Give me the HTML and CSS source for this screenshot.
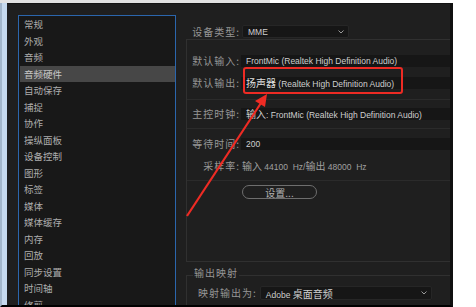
FILE: index.html
```html
<!DOCTYPE html>
<html lang="zh-CN">

<head>
    <meta charset="UTF-8">
    <meta name="viewport" content="width=device-width, initial-scale=1.0">
    <title>首选项 - 音频硬件</title>
    <link rel="stylesheet" href="styles.css">
</head>

<body>
    <div class="screen">
        <div class="topbar"><div class="topbar-tab"></div></div>

        <div class="desk">
            <div class="edge"></div>

            <div class="window">
                <ul class="cats">
                    <li>常规</li>
                    <li>外观</li>
                    <li>音频</li>
                    <li class="active">音频硬件</li>
                    <li>自动保存</li>
                    <li>捕捉</li>
                    <li>协作</li>
                    <li>操纵面板</li>
                    <li>设备控制</li>
                    <li>图形</li>
                    <li>标签</li>
                    <li>媒体</li>
                    <li>媒体缓存</li>
                    <li>内存</li>
                    <li>回放</li>
                    <li>同步设置</li>
                    <li>时间轴</li>
                    <li>修剪</li>
                </ul>

                <div class="pane">
                    <div class="row device">
                        <span class="label">设备类型:</span>
                        <div class="select short">
                            <span class="value">MME</span>
                            <svg class="chev" width="6" height="4" viewBox="0 0 6 4"><polyline points="0.5,0.5 3,3 5.5,0.5" fill="none" stroke="#9a9a9a" stroke-width="1"/></svg>
                        </div>
                    </div>

                    <div class="group">
                        <div class="block b1">
                            <div class="row">
                                <span class="label">默认输入:</span>
                                <div class="field">FrontMic (Realtek High Definition Audio)</div>
                            </div>
                            <div class="row">
                                <span class="label">默认输出:</span>
                                <div class="field"><span class="zh bright">扬声器</span> (Realtek High Definition Audio)</div>
                            </div>
                        </div>

                        <div class="block b2">
                            <div class="row">
                                <span class="label">主控时钟:</span>
                                <div class="field"><span class="zh">输入</span>: FrontMic (Realtek High Definition Audio)</div>
                            </div>
                        </div>

                        <div class="block b3">
                            <div class="row">
                                <span class="label">等待时间:</span>
                                <div class="field">200</div>
                            </div>
                            <div class="row">
                                <span class="label">采样率:</span>
                                <div class="info"><span class="zh">输入</span> 44100&nbsp; Hz/<span class="zh">输出</span> 48000&nbsp; Hz</div>
                            </div>
                        </div>

                        <div class="block b4">
                            <button class="btn">设置...</button>
                        </div>
                    </div>

                    <fieldset class="mapping">
                        <legend>输出映射</legend>
                        <div class="row">
                            <span class="label">映射输出为:</span>
                            <div class="select wide">
                                <span class="value">Adobe <span class="zh">桌面音频</span></span>
                                <svg class="chev" width="6" height="4" viewBox="0 0 6 4"><polyline points="0.5,0.5 3,3 5.5,0.5" fill="none" stroke="#9a9a9a" stroke-width="1"/></svg>
                            </div>
                        </div>
                    </fieldset>
                </div>
            </div>

            <div class="blank"></div>
        </div>

        <!-- annotation drawn over the screenshot -->
        <svg class="marks" width="476" height="307" viewBox="0 0 476 307">
            <rect x="244" y="68" width="158" height="25" rx="2" fill="none" stroke="#ee2b24" stroke-width="2"/>
            <line x1="187" y1="216" x2="261" y2="103" stroke="#ee2b24" stroke-width="2.2"/>
            <polygon points="267,94 265,107 255,101" fill="#ee2b24"/>
        </svg>
    </div>
</body>

</html>
```

FILE: styles.css
```css
* {
    box-sizing: border-box;
}

body {
    margin: 0;
    background: #fff;
    font-family: "Noto Sans CJK SC", sans-serif;
}

.screen {
    position: relative;
    width: 476px;
    height: 307px;
    overflow: hidden;
}

.topbar {
    height: 3px;
    background: #fff;
}

.topbar-tab {
    width: 270px;
    height: 3px;
    background: #e2e2e2;
}

.desk {
    display: flex;
    height: 304px;
}

.edge {
    width: 7px;
    background: #c6d9ee;
    border-left: 2px solid #a3b6cb;
    border-bottom: 2px solid #000;
}

.window {
    display: flex;
    align-items: flex-start;
    gap: 10px;
    width: 446px;
    padding-left: 11px;
    background: #1f1f1f;
    border-top: 1px solid #141414;
    border-right: 3px solid #101010;
    border-bottom: 2px solid #000;
    overflow: hidden;
}

.blank {
    flex: 1;
    background: #fff;
}

/* category list */
.cats {
    flex: none;
    width: 158px;
    height: 320px;
    margin: 11px 0 0;
    padding: 0 0 0 1px;
    list-style: none;
    background: #181818;
    border: 1px solid #2b66ad;
}

.cats li {
    height: 16.5px;
    line-height: 16.5px;
    padding-left: 4px;
    font-size: 9.5px;
    color: #adadad;
    white-space: nowrap;
}

.cats li.active {
    background: #474747;
    color: #c8c8c8;
}

/* settings pane */
.pane {
    flex: none;
    width: 300px;
}

.row {
    display: flex;
    align-items: center;
}

.label {
    flex: none;
    width: 50px;
    margin-right: 1px;
    text-align: right;
    font-size: 10px;
    line-height: 12px;
    letter-spacing: 1px;
    color: #969696;
    white-space: nowrap;
}

.device {
    height: 13px;
    margin-top: 21px;
    padding-left: 4px;
}

.select {
    display: flex;
    align-items: center;
    justify-content: space-between;
    padding: 0 4px 0 5px;
    background: #161616;
    border: 1px solid #262626;
    border-radius: 2px;
    font-family: "Liberation Sans", "Noto Sans CJK SC", sans-serif;
    font-size: 8.5px;
    color: #cfcfcf;
    white-space: nowrap;
}

.select.short {
    width: 107px;
    height: 13px;
    margin-left: 1px;
}

.select.wide {
    width: 172px;
    height: 14px;
}

.group {
    display: flex;
    flex-direction: column;
    height: 223px;
    margin-top: 1px;
    border: 1px solid #303030;
}

.group .row {
    padding-left: 3px;
}

.block {
    display: flex;
    flex-direction: column;
    border-bottom: 1px solid #2b2b2b;
}

.b1 {
    gap: 10px;
    padding: 15px 0 10px;
}

.b2 {
    padding: 8px 0 8px;
}

.b3 {
    gap: 10px;
    padding: 9px 0 8px;
}

.b4 {
    flex: 1;
    border-bottom: none;
    padding: 4px 0 0 55px;
}

.field {
    flex: 1;
    height: 12px;
    padding-left: 5px;
    background: #161616;
    font-family: "Liberation Sans", "Noto Sans CJK SC", sans-serif;
    font-size: 8.5px;
    line-height: 12px;
    color: #cfcfcf;
    white-space: nowrap;
    overflow: hidden;
}

.info {
    height: 12px;
    padding-left: 1px;
    font-family: "Liberation Sans", "Noto Sans CJK SC", sans-serif;
    font-size: 8.5px;
    line-height: 12px;
    color: #a0a0a0;
    white-space: nowrap;
}

.zh {
    font-family: "Noto Sans CJK SC", sans-serif;
    font-size: 10px;
}

.bright {
    color: #dedede;
}

.btn {
    width: 75px;
    height: 14px;
    padding: 0;
    background: transparent;
    border: 1px solid #6e6e6e;
    border-radius: 7px;
    font-family: "Noto Sans CJK SC", sans-serif;
    font-size: 10px;
    line-height: 11px;
    color: #b0b0b0;
}

/* output mapping */
.mapping {
    height: 60px;
    min-width: 0;
    margin: 5px 0 0;
    padding: 0 0 0 6px;
    border: 1px solid #303030;
}

.mapping legend {
    padding: 0 1px 4px;
    font-size: 10px;
    line-height: 12px;
    letter-spacing: 1px;
    color: #969696;
}

.mapping .row {
    margin-top: 3px;
}

.mapping .label {
    width: auto;
    padding-left: 5px;
    margin-right: 3px;
}

.marks {
    position: absolute;
    top: 0;
    left: 0;
    pointer-events: none;
}
```
